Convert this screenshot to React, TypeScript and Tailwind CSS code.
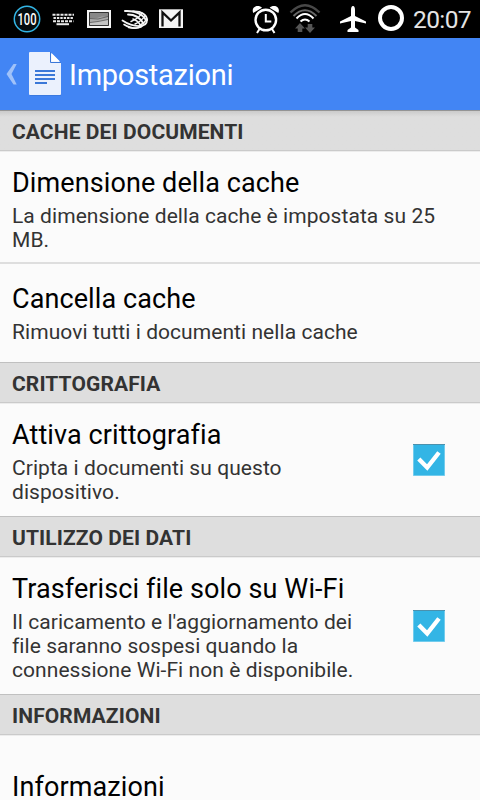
import type { ReactNode } from "react";

function StatusBar() {
  return (
    <div className="flex h-[38px] w-full items-center bg-black text-white">
      <svg width="200" height="38" viewBox="0 0 200 38" className="shrink-0">
        <circle cx="27" cy="19" r="12.7" fill="#050b0e" stroke="#33b5e5" strokeWidth="1.5" />
        <text x="27" y="25" textAnchor="middle" textLength="19" lengthAdjust="spacingAndGlyphs" fontFamily="Roboto" fontWeight="500" fontSize="17" fill="#fff">100</text>
        <g stroke="#e8e8e8" strokeWidth="2">
          <path d="M52.5 14.8h21.5" strokeDasharray="3 1" />
          <path d="M53.5 18h20" strokeDasharray="2.4 1" />
          <path d="M53 21.2h20.5" strokeDasharray="3 1" />
          <path d="M56.5 24.2h12.5" />
        </g>
        <path d="M88 11h22v16H88z" fill="#aaa" stroke="#f5f5f5" strokeWidth="2" />
        <path d="M90 13h18v4l-6-.5-5 1.500-7 0z" fill="#888" />
        <path d="M90 22.500l7-1 6-1.500h5v5H90z" fill="#c4c4c4" />
        <path d="M90 18.500l8 .5 10-2.500M90 22.500l8-1 10-2" fill="none" stroke="#555" strokeWidth=".8" />
        <path d="M89.500 12.500h19v13h-19z" fill="none" stroke="#333" strokeWidth="1" />
        <g fill="none" stroke="#f5f5f5" strokeLinecap="round">
          <path d="M125 11c10-.5 17 2 21 9" strokeWidth="2" />
          <path d="M128 14.500c7 0 12 3 15.500 9" strokeWidth="1.800" />
          <path d="M133 19c3.500 1 6 3.500 8 7" strokeWidth="1.600" />
          <path d="M122.500 20.500c6 4 12 6 18 5.500 4-.5 6.500-3 6.500-6" strokeWidth="1.800" />
          <path d="M124 24.500c5 3 12 4.500 17 2.500" strokeWidth="1.600" />
          <path d="M128.500 27.500c5 1.300 10 1 14-1.500" strokeWidth="1.400" />
          <path d="M133 11.500c9-.5 14 3.500 14 8.500" strokeWidth="1.800" />
          <path d="M131 21.500c5-2 9-5 11-8.500M135 24c5-2 8-5 10-8.500M139 26c4-2 6-4 8-7" strokeWidth="1.500" />
        </g>
        <path d="M159 9.300h24V28h-24z" fill="#f5f5f5" />
        <path d="M162.500 26.500v-14l8.500 8 8.500-8v14" fill="none" stroke="#111" strokeWidth="2.300" />
      </svg>
      <svg width="167" height="38" viewBox="240 0 167 38" className="ml-10 shrink-0">
        <circle cx="265.800" cy="20" r="10.300" fill="none" stroke="#fff" strokeWidth="2.400" />
        <path d="M265.800 14v7.500h5.500M259.500 29l-2.500 4M272 29l2.500 4" fill="none" stroke="#fff" strokeWidth="2" />
        <path d="M253.300 12.900c-1.800-3.500.7-6.900 4.200-6.900 2 0 3.500.6 4.500 1.800zM278.300 12.900c1.800-3.500-.7-6.900-4.200-6.900-2 0-3.500.6-4.500 1.800z" fill="#fff" />
        <path d="M290.500 12.500q14.500-14.500 29 0" fill="none" stroke="#484848" strokeWidth="2.400" />
        <path d="M293.500 16q11.500-11.500 23 0" fill="none" stroke="#686868" strokeWidth="2" />
        <path d="M296.500 18.500q8.500-9 17 0M300.500 21.500q4.500-4 9 0" fill="none" stroke="#fff" strokeWidth="2" />
        <path d="M300 23l5 5.500h-2.700V32h-4.600v-3.500H295zM310 33l-5-5.500h2.700V24h4.600v3.500h2.700z" fill="#555" />
        <path d="M353 6c1.500 0 2 2 2 4v6l11 5.500v2l-11-2.500v6.500l3.500 2.500v2h-11v-2l3.500-2.500V21l-11 2.500v-2l11-5.500v-6c0-2 .5-4 2-4z" fill="#fff" />
        <circle cx="391" cy="18" r="11" fill="none" stroke="#fff" strokeWidth="4" />
      </svg>
      <span className="ml-[6px] whitespace-nowrap pt-px text-[24.500px] leading-[38px] tracking-[-0.600px] text-[#e4e4e4]">20:07</span>
    </div>
  );
}

function ActionBar() {
  return (
    <div className="flex h-[72px] w-full items-center bg-[#4285f4]">
      <svg width="62" height="72" viewBox="0 38 62 72" className="shrink-0">
        <path d="M13.500 64h3.200l-5.200 10 5.200 10.500h-3.200L6.500 74z" fill="#a0c2f9" />
        <path d="M30 53h31v43H30z" fill="#2f66c4" opacity=".4" />
        <path d="M30 52h20.500l10.500 11v31a1 1 0 0 1-1 1H30a1 1 0 0 1-1-1V53a1 1 0 0 1 1-1z" fill="#ebf1fd" />
        <path d="M50 52h11v10.500z" fill="#4285f4" />
        <path d="M50.500 52v10.500H61" fill="none" stroke="#3b78d8" strokeWidth="1" />
        <path d="M51.500 53v8.500H60z" fill="#fff" />
        <path d="M35 71h20M35 75h20M35 79h20M35 83h12" stroke="#3b78d8" strokeWidth="2" />
      </svg>
      <h1 className="ml-[7px] whitespace-nowrap pt-[2px] text-[29px] leading-8 font-normal tracking-[-0.250px] text-white">Impostazioni</h1>
    </div>
  );
}

function SectionHeader({ first, children }: { first?: boolean; children: ReactNode }) {
  return (
    <div
      className={
        first
          ? "flex h-[41px] items-center border-t border-b border-t-[#949494] border-b-[#cacaca] bg-linear-to-b from-[#cbcbcb] to-[#dedede] to-15% px-3 pt-[2px]"
          : "flex h-[41px] items-center border-t border-b border-t-[#c0c0c0] border-b-[#cacaca] bg-[#dedede] px-3 pt-[2px]"
      }
    >
      <h2 className="text-[21px] leading-6 font-bold tracking-[0.100px] text-[#333]">{children}</h2>
    </div>
  );
}

function Title({ children }: { children: ReactNode }) {
  return <h3 className="text-[27px] leading-8 tracking-[0.100px] whitespace-nowrap text-black [font-variant-ligatures:common-ligatures]">{children}</h3>;
}

function Summary({ children }: { children: ReactNode }) {
  return <p className="mt-[5px] text-[21px] leading-6 tracking-[0.060px] whitespace-nowrap text-[#333]">{children}</p>;
}

function Checkbox() {
  return (
    <svg width="32" height="32" viewBox="0 0 32 32" className="absolute right-[35px]">
      <path d="M0 0h32v32H0z" fill="#8dd6f1" />
      <path d="M.7 0h30.600v31.300H.7z" fill="#33b5e5" />
      <path d="M0 0h32v1H0z" fill="#4b91ad" />
      <path d="M5.800 15l8.400 8.500L26 8.500" fill="none" stroke="#fff" strokeWidth="4.400" />
    </svg>
  );
}

export default function App() {
  return (
    <main className="h-[800px] w-[480px] overflow-hidden bg-[#fbfbfb] font-[Roboto,sans-serif]">
      <StatusBar />
      <ActionBar />

      <SectionHeader first>CACHE DEI DOCUMENTI</SectionHeader>
      <div className="h-[113px] border-t border-b-2 border-t-[#ececec] border-b-[#dedede] px-3 pt-[15px]">
        <Title>Dimensione della cache</Title>
        <Summary>
          La dimensione della cache è impostata su 25<br />MB.
        </Summary>
      </div>
      <div className="h-[98px] px-3 pt-[19px]">
        <Title>Cancella cache</Title>
        <Summary>Rimuovi tutti i documenti nella cache</Summary>
      </div>

      <SectionHeader>CRITTOGRAFIA</SectionHeader>
      <div className="relative flex h-[113px] items-center border-t border-[#ececec] px-3">
        <div className="h-full pt-[15px]">
          <Title>Attiva crittografia</Title>
          <Summary>
            Cripta i documenti su questo<br />dispositivo.
          </Summary>
        </div>
        <Checkbox />
      </div>

      <SectionHeader>UTILIZZO DEI DATI</SectionHeader>
      <div className="relative flex h-[137px] items-center border-t border-[#ececec] px-3">
        <div className="h-full pt-[15px]">
          <Title>Trasferisci file solo su Wi-Fi</Title>
          <Summary>
            Il caricamento e l&apos;aggiornamento dei<br />file saranno sospesi quando la<br />connessione Wi-Fi non è disponibile.
          </Summary>
        </div>
        <Checkbox />
      </div>

      <SectionHeader>INFORMAZIONI</SectionHeader>
      <div className="h-[65px] border-t border-[#ececec] px-3 pt-[35px]">
        <h3 className="text-[27px] leading-[29px] tracking-[0.100px] pt-[1.500px] text-black">Informazioni</h3>
      </div>
    </main>
  );
}
